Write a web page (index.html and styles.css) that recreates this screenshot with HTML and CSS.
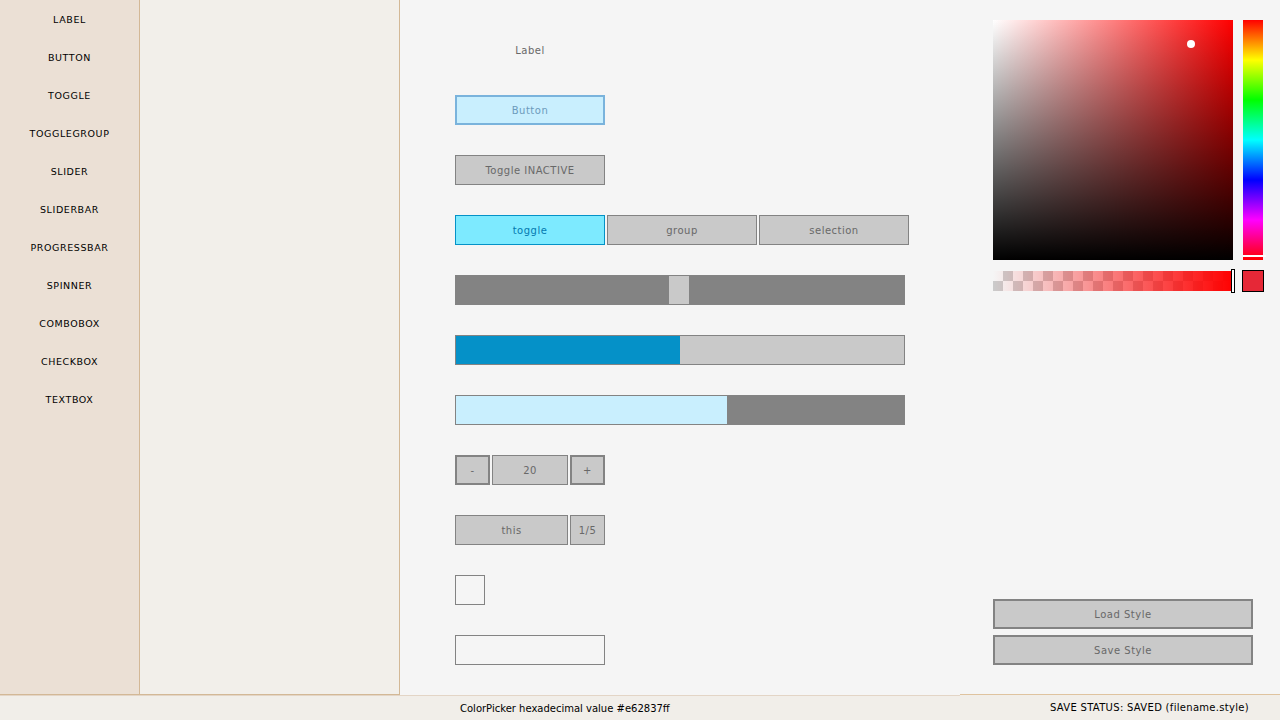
FILE: index.html
```html
<!DOCTYPE html>
<html>
<head>
<meta charset="utf-8">
<link rel="stylesheet" href="styles.css">
</head>
<body>
<div class="app">
  <div class="top">
    <nav class="sidebar">
      <div class="nav-item">LABEL</div>
      <div class="nav-item">BUTTON</div>
      <div class="nav-item">TOGGLE</div>
      <div class="nav-item">TOGGLEGROUP</div>
      <div class="nav-item">SLIDER</div>
      <div class="nav-item">SLIDERBAR</div>
      <div class="nav-item">PROGRESSBAR</div>
      <div class="nav-item">SPINNER</div>
      <div class="nav-item">COMBOBOX</div>
      <div class="nav-item">CHECKBOX</div>
      <div class="nav-item">TEXTBOX</div>
    </nav>
    <section class="props"></section>
    <main class="preview">
      <div class="row"><div class="label">Label</div></div>
      <div class="row"><div class="ctl btn-focus">Button</div></div>
      <div class="row"><div class="ctl">Toggle INACTIVE</div></div>
      <div class="row group">
        <div class="ctl toggle-on">toggle</div>
        <div class="ctl">group</div>
        <div class="ctl">selection</div>
      </div>
      <div class="row"><div class="slider"><div class="thumb"></div></div></div>
      <div class="row"><div class="progress"><div class="fill" style="width:224px"></div></div></div>
      <div class="row"><div class="sliderbar"><div class="fill" style="width:271px"></div></div></div>
      <div class="row group">
        <div class="ctl thick small">-</div>
        <div class="ctl value">20</div>
        <div class="ctl thick small">+</div>
      </div>
      <div class="row group">
        <div class="ctl combo">this</div>
        <div class="ctl small">1/5</div>
      </div>
      <div class="row"><div class="checkbox"></div></div>
      <div class="row"><div class="textbox"></div></div>
    </main>
    <aside class="tools">
      <div class="picker">
        <div class="picker-row">
          <div class="sv"><div class="sv-dot"></div></div>
          <div class="hue"><div class="hue-mark"></div></div>
        </div>
        <div class="picker-row alpha-row">
          <div class="alpha"><div class="alpha-mark"></div></div>
          <div class="swatch"></div>
        </div>
      </div>
      <div class="file-btns">
        <div class="ctl thick wide">Load Style</div>
        <div class="ctl thick wide">Save Style</div>
      </div>
    </aside>
  </div>
  <div class="status">
    <div class="status-left">ColorPicker hexadecimal value #e62837ff</div>
    <div class="status-right">SAVE STATUS: SAVED (filename.style)</div>
  </div>
</div>
</body>
</html>
```

FILE: styles.css
```css
* { box-sizing: border-box; }
html, body { margin: 0; padding: 0; }
body {
  width: 1280px;
  height: 720px;
  overflow: hidden;
  background: #f5f5f5;
  font-family: "DejaVu Sans", "Liberation Sans", sans-serif;
  font-size: 10px;
  letter-spacing: 0.5px;
  color: #686868;
}
.app { display: flex; flex-direction: column; height: 720px; }
.top { display: flex; height: 695px; }

.sidebar {
  width: 140px;
  flex-shrink: 0;
  background: #ebe0d5;
  border-right: 1px solid #d3b896;
  border-bottom: 1px solid #d3b896;
  display: flex;
  flex-direction: column;
}
.nav-item {
  height: 38px;
  display: flex;
  align-items: center;
  justify-content: center;
  color: #000;
  font-size: 9.5px;
  letter-spacing: 0.6px;
}
.props {
  width: 260px;
  flex-shrink: 0;
  background: #f2efea;
  border-right: 1px solid #d3b896;
  border-bottom: 1px solid #d3b896;
}
.preview {
  width: 560px;
  flex-shrink: 0;
  padding: 35px 0 0 55px;
  display: flex;
  flex-direction: column;
  gap: 30px;
}
.row { height: 30px; display: flex; }
.row.group { gap: 2px; }
.label {
  width: 150px;
  display: flex; align-items: center; justify-content: center;
  color: #686868;
}
.ctl {
  width: 150px;
  height: 30px;
  flex-shrink: 0;
  background: #c9c9c9;
  border: 1px solid #838383;
  color: #686868;
  display: flex; align-items: center; justify-content: center;
}
.ctl.thick { border-width: 2px; }
.ctl.small { width: 35px; }
.ctl.value { width: 76px; }
.ctl.combo { width: 113px; }
.btn-focus {
  background: #c9effe;
  border: 2px solid #7ab3dc;
  color: #6c9bbc;
}
.toggle-on {
  background: #7deaff;
  border-color: #0492c7;
  color: #0479b0;
}
.slider {
  width: 450px; height: 30px;
  background: #838383;
  padding: 1px 0 1px 214px;
}
.thumb { width: 20px; height: 28px; background: #c9c9c9; }
.progress {
  width: 450px; height: 30px;
  background: #c9c9c9;
  border: 1px solid #838383;
}
.progress .fill { height: 28px; background: #0591c8; }
.sliderbar {
  width: 450px; height: 30px;
  background: #838383;
  border: 1px solid #838383;
}
.sliderbar .fill { height: 28px; background: #c9effe; }
.checkbox { width: 30px; height: 30px; border: 1px solid #838383; }
.textbox { width: 150px; height: 30px; border: 1px solid #838383; background: #f5f5f5; }

.tools {
  width: 320px;
  flex-shrink: 0;
  padding: 20px 17px 30px 33px;
  display: flex;
  flex-direction: column;
  justify-content: space-between;
}
.picker { display: flex; flex-direction: column; gap: 10px; }
.picker-row { display: flex; gap: 10px; }
.sv {
  position: relative;
  flex-shrink: 0;
  width: 240px; height: 240px;
  background:
    linear-gradient(to top, #000, rgba(0,0,0,0)),
    linear-gradient(to right, #fff, #f00);
}
.sv-dot {
  position: absolute;
  left: 194px; top: 20px;
  width: 8px; height: 8px;
  border-radius: 50%;
  background: #fff;
}
.hue {
  position: relative;
  flex-shrink: 0;
  width: 20px; height: 240px;
  background: linear-gradient(to bottom, #f00 0%, #ff0 16.7%, #0f0 33.3%, #0ff 50%, #00f 66.7%, #f0f 83.3%, #f00 100%);
}
.hue-mark {
  position: absolute;
  left: 0; top: 235px;
  width: 23px; height: 2px;
  background: #fff;
}
.alpha-row { gap: 9px; align-items: center; }
.alpha {
  position: relative;
  flex-shrink: 0;
  width: 240px; height: 20px;
  background:
    linear-gradient(to right, rgba(255,0,0,0), rgba(255,0,0,1)),
    conic-gradient(#cbcbcb 25%, #f5f5f5 0 50%, #cbcbcb 0 75%, #f5f5f5 0) 0 0 / 20px 20px;
}
.alpha-mark {
  position: absolute;
  left: 238px; top: -2px;
  width: 4px; height: 24px;
  background: #fff;
  border: 1px solid #000;
}
.swatch {
  flex-shrink: 0;
  width: 22px; height: 22px;
  background: #e62837;
  border: 1px solid #000;
}
.file-btns { display: flex; flex-direction: column; gap: 6px; }
.ctl.wide { width: 260px; }

.status { display: flex; height: 25px; }
.status-left {
  width: 960px;
  flex-shrink: 0;
  background: #f1eee9;
  border-top: 1px solid #e3d5c6;
  padding-left: 460px;
  display: flex; align-items: center;
  color: #000;
  font-size: 10px;
  letter-spacing: 0;
}
.status-right {
  width: 320px;
  flex-shrink: 0;
  background: #f1eee9;
  box-shadow: 0 -1px 0 #dfc39f;
  padding-left: 90px;
  display: flex; align-items: center;
  color: #000;
  font-size: 10px;
  letter-spacing: 0.3px;
  white-space: nowrap;
}
```
